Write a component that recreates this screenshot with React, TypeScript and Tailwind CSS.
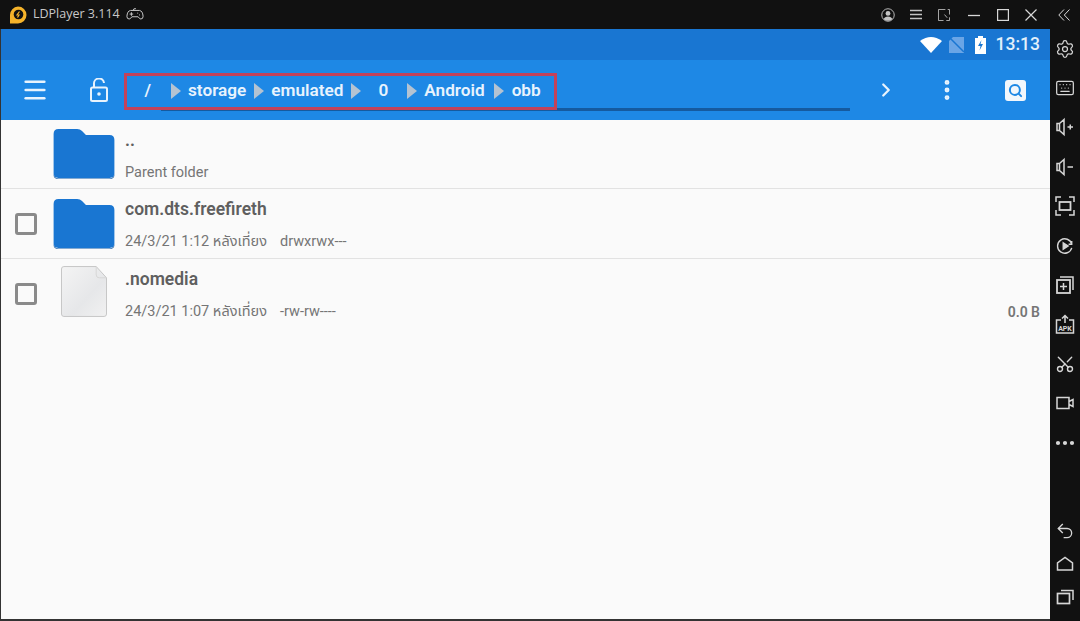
import { Menu, ChevronRight, EllipsisVertical, Search, Settings, Keyboard, Scissors, Ellipsis, Undo2 } from 'lucide-react'

// breadcrumb segments, with the width of the slot each one sits in
const Crumb = ({ label, className }: { label: string; className: string }) => (
  <div className={`flex items-center ${className}`}>
    <span className="text-[17.2px] font-semibold text-[#e8f3fd] leading-none">{label}</span>
  </div>
)

const Arrow = ({ className }: { className: string }) => (
  <svg width="10" height="16" viewBox="0 0 10 16" className={className}>
    <path d="M0 0 L10 8 L0 16 Z" fill="#b4c3d2" />
  </svg>
)

const FolderIcon = () => (
  <svg width="62" height="50" viewBox="0 0 62 51">
    <path d="M5 0 H24 Q27 0 29 2 L33 6 H57 Q62 6 62 11 V45 Q62 50 57 50 H5 Q0 50 0 45 V5 Q0 0 5 0 Z" fill="#1976d2" />
    <path d="M0 45 Q0 50.500 5 50.500 H57 Q62 50.500 62 45 V47 Q62 51 57 51 H5 Q0 51 0 47 Z" fill="#0f5aa8" />
  </svg>
)

const FileIcon = () => (
  <svg width="46" height="51" viewBox="0 0 47 52" className="mb-[5px]">
    <defs>
      <linearGradient id="page" x1="0" y1="0" x2="1" y2="1">
        <stop offset="0" stopColor="#f4f4f4" />
        <stop offset="0.6" stopColor="#e6e7e9" />
        <stop offset="1" stopColor="#f1f1f1" />
      </linearGradient>
    </defs>
    <path d="M3 .5 H36 L46.500 12 V49 Q46.500 51.500 44 51.500 H3 Q.5 51.500 .5 49 V3 Q.5 .5 3 .5 Z" fill="url(#page)" stroke="#c6c6c6" />
    <path d="M36 .5 V9 Q36 12 39 12 H46.500" fill="none" stroke="#d6d6d6" />
  </svg>
)

const Checkbox = () => <div className="w-[22px] h-[22px] border-[3px] border-[#8a8a8a] rounded-[3px] bg-[#fafafa]" />

type RowProps = {
  name: string
  meta: string
  perms?: string
  size?: string
  check?: boolean
  last?: boolean
  icon: React.ReactNode
  height: string
}

const Row = ({ name, meta, perms, size, check = true, last = false, icon, height }: RowProps) => (
  <div className={`flex items-center ${last ? '' : 'border-b border-[#e2e2e2]'} ${height}`}>
    <div className="w-[52px] flex justify-center pr-[3px]">{check && <Checkbox />}</div>
    <div className="w-[62px] flex justify-center">{icon}</div>
    <div className="ml-[10px] flex-1 h-full flex flex-col">
      <div className="mt-[10.500px] h-[20px] flex items-center text-[17.5px] leading-none text-[#5f5f5f] font-semibold">{name}</div>
      <div className="mt-[14.500px] h-[16px] flex items-center text-[14.5px] leading-none text-[#757575] whitespace-pre">
        <span>{meta}</span>
        {perms && <span className="ml-[13px]">{perms}</span>}
      </div>
    </div>
    {size && <div className="self-end mb-[9px] pr-[10px] text-[14px] font-semibold text-[#757575] leading-none pb-[1px]">{size}</div>}
  </div>
)

const RailButton = ({ children, short = false }: { children: React.ReactNode; short?: boolean }) => (
  <div className={`${short ? 'h-[33px]' : 'h-[39.4px]'} flex items-center justify-center text-[#d6d6d6]`}>{children}</div>
)

const ic = { width: 20, height: 20, viewBox: '0 0 20 20', fill: 'none', stroke: 'currentColor', strokeWidth: 1.5 }

export default function App() {
  return (
    <div
      className="w-[1080px] h-[621px] overflow-hidden flex flex-col bg-[#111111]"
      style={{ fontFamily: 'Roboto, "Noto Sans", "Noto Sans Thai", "DejaVu Sans", sans-serif' }}
    >
      {/* Title bar */}
      <div className="h-[29px] flex items-center shrink-0 text-[#c8c8c8]">
        <svg width="20" height="20" viewBox="0 0 20 20" className="ml-[8px]">
          <path d="M10 1.500 A8.500 8.500 0 0 1 10 18.500 H2 V10 A8.500 8.500 0 0 1 10 1.500 Z" fill="#f5b32a" />
          <circle cx="10.500" cy="9.500" r="4.800" fill="#111111" />
          <path d="M11.500 6.500 L9 10 H11 L9.500 12.500" stroke="#f5b32a" strokeWidth="1.200" fill="none" />
        </svg>
        <span className="ml-[5px] text-[12.5px] leading-none" style={{ fontFamily: '"Open Sans", sans-serif' }}>LDPlayer 3.114</span>
        <svg width="18" height="15" viewBox="0 0 20 16" fill="none" stroke="#c8c8c8" strokeWidth="1.100" className="ml-[6px]">
          <path d="M5 3.500 H15 Q18.500 4 19 10 Q19 13 16.500 13 Q15 13 13.500 10.500 H6.500 Q5 13 3.500 13 Q1 13 1 10 Q1.500 4 5 3.500 Z" />
          <path d="M4 7.500 H8 M6 5.500 V9.500 M12.500 6.500 H13.500 M14.500 8.500 H15.500" />
          <path d="M8 3.500 Q8 1 11 1.500" />
        </svg>

        <div className="ml-auto flex items-center mr-[10px]">
          <svg width="14" height="14" viewBox="0 0 15 15" className="mr-[15px]">
            <circle cx="7.500" cy="7.500" r="6.700" fill="none" stroke="#c4c4c4" />
            <circle cx="7.500" cy="5.800" r="2.600" fill="#c4c4c4" />
            <path d="M2.800 12 Q4 9 7.500 9 Q11 9 12.200 12 Q7.500 15.500 2.800 12 Z" fill="#c4c4c4" />
          </svg>
          <svg width="12" height="11" viewBox="0 0 13 11" stroke="#c4c4c4" strokeWidth="1.500" className="mr-[16px]">
            <path d="M0 1.200 H13 M0 5.500 H13 M0 9.800 H13" />
          </svg>
          <svg width="12" height="12" viewBox="0 0 13 13" fill="none" stroke="#b8b8b8" className="mr-[18px]">
            <path d="M8 .5 H.5 V12.500 H6 M12.500 6 V.5 H10.500 M12.500 9 V12.500 H9 M7 6 L10 9.500" />
          </svg>
          <svg width="12" height="12" viewBox="0 0 12 12" stroke="#d8d8d8" strokeWidth="1.300" className="mr-[17px]">
            <path d="M0 6.500 H12" />
          </svg>
          <svg width="12" height="12" viewBox="0 0 12 12" fill="none" stroke="#d8d8d8" strokeWidth="1.200" className="mr-[16px]">
            <rect x=".6" y=".6" width="10.800" height="10.800" />
          </svg>
          <svg width="12" height="12" viewBox="0 0 12 12" fill="none" stroke="#d8d8d8" strokeWidth="1.200" className="mr-[21px]">
            <path d="M.5 .5 L11.500 11.500 M11.500 .5 L.5 11.500" />
          </svg>
          <svg width="12" height="12" viewBox="0 0 12 12" fill="none" stroke="#d8d8d8" strokeWidth="1">
            <path d="M6 .5 L.8 6 L6 11.500 M11.500 .5 L6.300 6 L11.500 11.500" />
          </svg>
        </div>
      </div>

      <div className="flex flex-1 min-h-0">
        {/* Android screen */}
        <div className="w-[1050px] flex flex-col border-l border-[#333333] border-b-[2px] border-b-[#333333] bg-[#fafafa]">
          <div className="h-[31px] bg-[#1976d2] flex items-center justify-end shrink-0 pr-[10px]">
            <svg width="22" height="16" viewBox="0 0 22 16" className="mr-[7px]">
              <path d="M0 4 Q11 -4 22 4 L11 16 Z" fill="#ffffff" />
            </svg>
            <svg width="15" height="16" viewBox="0 0 15 16" className="mr-[11px]">
              <path d="M4 0 H15 V16 H0 V4 Z" fill="#6aa5e6" />
              <path d="M1 1 L15 15" stroke="#1976d2" strokeWidth="1.500" />
            </svg>
            <svg width="11" height="18" viewBox="0 0 11 18" className="mr-[10px]">
              <path d="M3 0 H8 V2 H11 V18 H0 V2 H3 Z" fill="#ffffff" />
              <path d="M6.500 4 L3 10 H5.500 L4.500 14.500 L8 8 H5.500 Z" fill="#1976d2" />
            </svg>
            <span className="text-[17.5px] text-[#e3f0fb] font-medium leading-none">13:13</span>
          </div>

          {/* Toolbar */}
          <div className="h-[60px] bg-[#1e88e5] flex items-center shrink-0 relative">
            <Menu size={28} strokeWidth={2.200} className="ml-[20px] text-[#e8f3fd]" />
            <svg width="18" height="24" viewBox="0 0 18 24" fill="none" stroke="#e8f3fd" strokeWidth="2" className="ml-[41px]">
              <rect x="1" y="9.500" width="16" height="13.500" rx="1.500" />
              <path d="M4 9.500 V6 A5 5 0 0 1 14 5" />
              <circle cx="9" cy="16" r="1.800" fill="#e8f3fd" stroke="none" />
            </svg>

            <div className="ml-[22px] w-[720px] h-full relative">
              <div className="h-full flex items-center pt-[2px]">
                <Crumb label="/" className="w-[23px] justify-end pr-[2px]" />
                <Arrow className="ml-[18px]" />
                <Crumb label="storage" className="ml-[7px]" />
                <Arrow className="ml-[8px]" />
                <Crumb label="emulated" className="ml-[7px]" />
                <Arrow className="ml-[8px]" />
                <Crumb label="0" className="ml-[17px]" />
                <Arrow className="ml-[19px]" />
                <Crumb label="Android" className="ml-[7px]" />
                <Arrow className="ml-[9px]" />
                <Crumb label="obb" className="ml-[8px]" />
              </div>
              <div className="absolute left-[31px] right-0 bottom-[9px] h-[3px] bg-[#155a9f]" />
            </div>

            <div className="absolute left-[123px] top-[13px] w-[433px] h-[37px] border-[3px] border-[#c4425a]" />

            <ChevronRight size={22} strokeWidth={2.500} className="ml-[25px] text-[#e8f3fd]" />
            <EllipsisVertical size={26} strokeWidth={2.500} className="ml-[37px] text-[#e8f3fd]" />
            <div className="ml-[45px] w-[21px] h-[21px] bg-[#f2f7fc] rounded-[3px] flex items-center justify-center">
              <Search size={15} strokeWidth={3.200} className="text-[#1e88e5]" />
            </div>
          </div>

          {/* File list */}
          <div className="flex-1 flex flex-col">
            <Row name=".." meta="Parent folder" check={false} icon={<FolderIcon />} height="h-[69px]" />
            <Row name="com.dts.freefireth" meta="24/3/21 1:12 หลังเที่ยง" perms="drwxrwx---" icon={<FolderIcon />} height="h-[70px]" />
            <Row name=".nomedia" meta="24/3/21 1:07 หลังเที่ยง" perms="-rw-rw----" size="0.0 B" icon={<FileIcon />} height="h-[70px]" last />
          </div>
        </div>

        {/* Right rail */}
        <div className="flex-1 flex flex-col pb-[8px]">
          <RailButton><Settings size={20} strokeWidth={1.500} /></RailButton>
          <RailButton><Keyboard size={20} strokeWidth={1.500} /></RailButton>
          <RailButton>
            <svg {...ic}><path d="M9 2.500 L4.500 6.500 H2 V13.500 H4.500 L9 17.500 Z M4.500 6.500 V13.500 M12.500 10 H18 M15.250 7.500 V12.500" /></svg>
          </RailButton>
          <RailButton>
            <svg {...ic}><path d="M9 2.500 L4.500 6.500 H2 V13.500 H4.500 L9 17.500 Z M4.500 6.500 V13.500 M12.500 10 H18" /></svg>
          </RailButton>
          <RailButton>
            <svg {...ic}><path d="M1 6 V1 H6 M14 1 H19 V6 M19 14 V19 H14 M6 19 H1 V14" /><rect x="4.500" y="6" width="11" height="8" strokeWidth="1.800" /></svg>
          </RailButton>
          <RailButton>
            <svg {...ic} width={18} height={18}><path d="M17.500 8 A8 8 0 1 0 17.500 12 M17.500 4.500 V8 H14" /><path d="M8 6.500 L13.500 10 L8 13.500 Z" fill="currentColor" /></svg>
          </RailButton>
          <RailButton>
            <svg {...ic}><rect x="2" y="5" width="13" height="13" strokeWidth="1.800" /><path d="M5 2 H18 V15 M8.500 8 V15 M5 11.500 H12" /></svg>
          </RailButton>
          <RailButton>
            <svg {...ic}><path d="M6 6 H1.500 V19 H18.500 V6 H14 M10 9 V2 M7 4.500 L10 1.500 L13 4.500" /><text x="10" y="16.500" textAnchor="middle" fontSize="7" fontWeight="700" fill="currentColor" stroke="none">APK</text></svg>
          </RailButton>
          <RailButton><Scissors size={20} strokeWidth={1.700} className="rotate-[-90deg]" /></RailButton>
          <RailButton>
            <svg {...ic}><path d="M2 4.500 H14 V15.500 H2 Z M14 8.500 L18 6.500 V13.500 L14 11.500" /></svg>
          </RailButton>
          <RailButton><Ellipsis size={24} strokeWidth={2.200} /></RailButton>

          <div className="mt-auto flex flex-col">
            <RailButton short><Undo2 size={20} strokeWidth={1.600} /></RailButton>
            <RailButton short>
              <svg {...ic}><path d="M2.500 16 V9 L10 3.500 L17.500 9 V16 Z" /></svg>
            </RailButton>
            <RailButton short>
              <svg {...ic}><rect x="2.500" y="6.500" width="12" height="10" strokeWidth="1.700" /><path d="M6 3.500 H18 V13" /></svg>
            </RailButton>
          </div>
        </div>
      </div>
    </div>
  )
}
